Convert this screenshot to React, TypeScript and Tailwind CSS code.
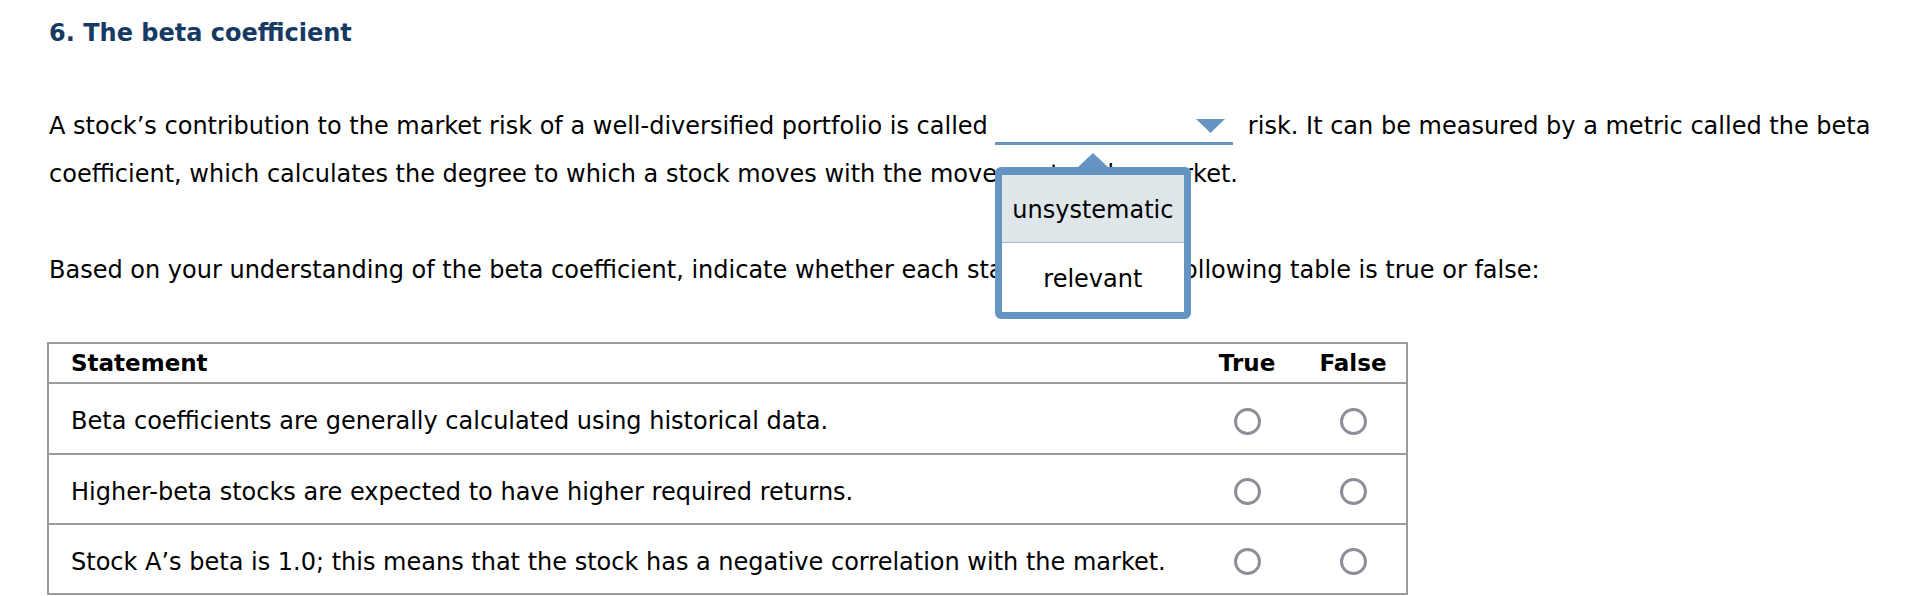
const BLUE = "#6594c2";

function Radio() {
  return <div className="mx-auto h-[27px] w-[27px] rounded-full border-[3px] border-[#8e8e99]" />;
}

function Dropdown() {
  return (
    <span className="relative ml-[7px] mr-[15px] inline-block h-[30px] w-[238px] border-b-[3px] border-[#6594c2] align-[-11px]">
      <svg className="absolute right-[8px] top-[4px]" width="29" height="14" viewBox="0 0 29 14">
        <polygon points="0,0 29,0 14.5,14" fill={BLUE} />
      </svg>
      <span className="absolute left-0 top-[38px] w-[196px]">
        <svg className="mx-auto block" width="30" height="14" viewBox="0 0 30 14">
          <polygon points="0,14 15,0 30,14" fill={BLUE} />
        </svg>
        <span className="block overflow-hidden rounded-[6px] border-[7px] border-t-[8px] border-[#6594c2] bg-white">
          <span className="flex h-[68px] items-center justify-center border-b border-[#9fb7cf] bg-[#dfe6e9] pt-[2px] text-[24px]">
            unsystematic
          </span>
          <span className="flex h-[69px] items-center justify-center bg-white pt-[2px] text-[24px]">relevant</span>
        </span>
      </span>
    </span>
  );
}

const rows = [
  "Beta coefficients are generally calculated using historical data.",
  "Higher-beta stocks are expected to have higher required returns.",
  "Stock A’s beta is 1.0; this means that the stock has a negative correlation with the market.",
];

export default function App() {
  return (
    <div
      className="h-[596px] overflow-hidden bg-white pl-[49px] text-[24px] text-black"
      style={{ fontFamily: '"DejaVu Sans", Verdana, sans-serif' }}
    >
      <h1 className="pt-[17px] text-[24px] font-bold leading-[32px] text-[#163a63]">6. The beta coefficient</h1>

      <p className="mt-[53px] whitespace-nowrap leading-[48px]">
        A stock’s contribution to the market risk of a well-diversified portfolio is called
        <Dropdown />
        risk. It can be measured by a metric called the beta
        <br />
        coefficient, which calculates the degree to which a stock moves with the movement of the market.
      </p>

      <p className="mt-[48px] whitespace-nowrap leading-[48px]">
        Based on your understanding of the beta coefficient, indicate whether each statement in the following table is
        true or false:
      </p>

      <div className="relative -z-0 mt-[48px] ml-[-2px] w-[1361px] border-2 border-[#9b9b9b]">
        <div className="flex h-[38px] items-center text-[23px] font-bold">
          <div className="flex-1 pl-[22px]">Statement</div>
          <div className="w-[106px] text-center">True</div>
          <div className="w-[106px] text-center">False</div>
        </div>
        {rows.map((r, i) => (
          <div
            key={i}
            className={`flex items-center border-t-2 border-[#9b9b9b] pt-[5px] ${i === 0 ? "h-[71px]" : "h-[70px]"}`}
          >
            <div className="flex-1 pl-[22px]">{r}</div>
            <div className="w-[106px]">
              <Radio />
            </div>
            <div className="w-[106px]">
              <Radio />
            </div>
          </div>
        ))}
      </div>
    </div>
  );
}
